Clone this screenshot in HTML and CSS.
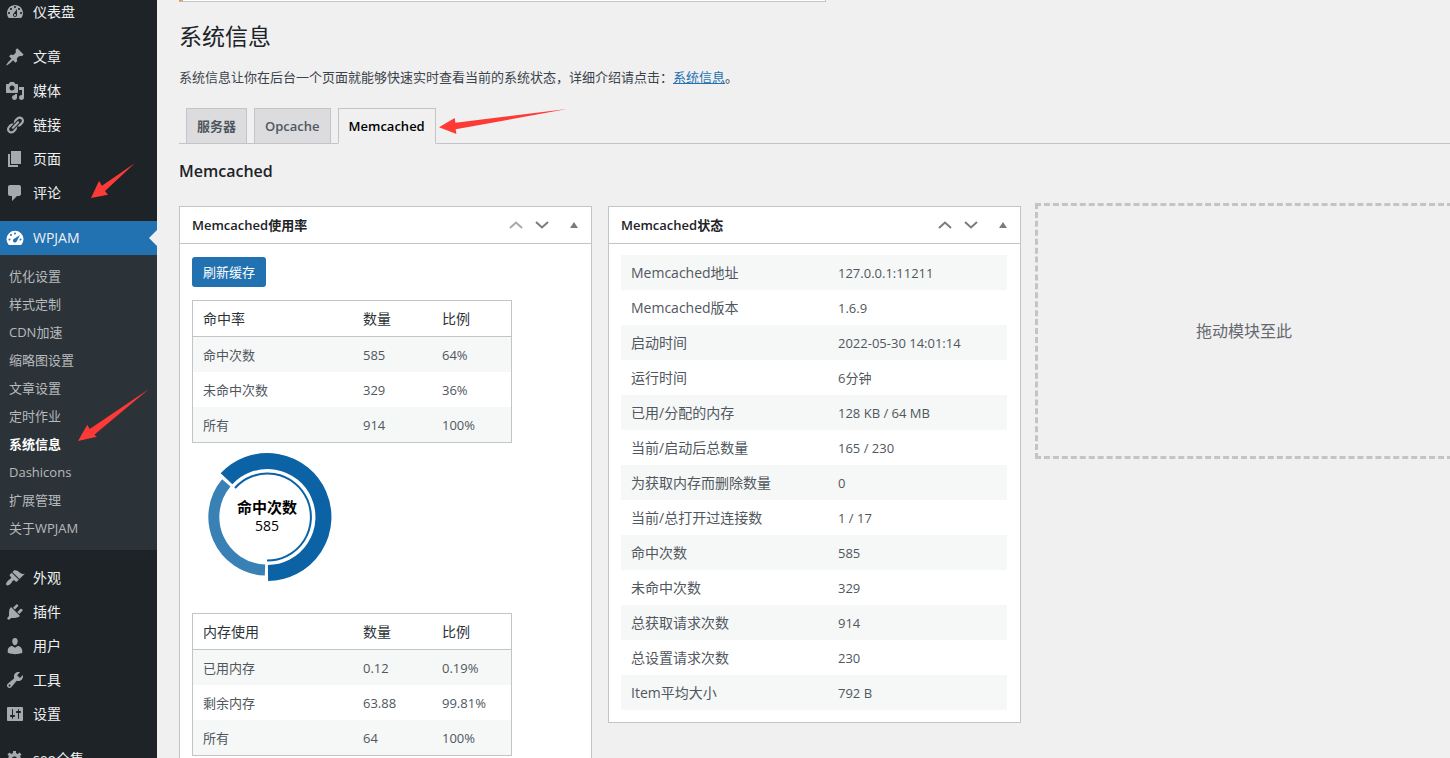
FILE: index.html
```html
<!doctype html>
<html lang="zh-CN">
 <head>
  <meta charset="UTF-8">
  <meta name="viewport" content="width=device-width, initial-scale=1">
  <title>系统信息</title>
  <link rel="stylesheet" href="styles.css">
 </head>
 <body>

	<div id="wrap">

		<!-- 左侧菜单 -->
		<nav id="menu">
			<ul class="menu-list">
				<li><a href="#"><svg viewBox="0 0 20 20"><path d="M3.76 16h12.48c1.1-1.37 1.76-3.11 1.76-5 0-4.42-3.58-8-8-8s-8 3.58-8 8c0 1.89.66 3.63 1.76 5zM10 4c.55 0 1 .45 1 1s-.45 1-1 1-1-.45-1-1 .45-1 1-1zM6 6c.55 0 1 .45 1 1s-.45 1-1 1-1-.45-1-1 .45-1 1-1zm8 0c.55 0 1 .45 1 1s-.45 1-1 1-1-.45-1-1 .45-1 1-1zm-5.37 5.55L12 7v6c0 1.1-.9 2-2 2s-2-.9-2-2c0-.57.24-1.08.63-1.45zM4 10c.55 0 1 .45 1 1s-.45 1-1 1-1-.45-1-1 .45-1 1-1zm12 0c.55 0 1 .45 1 1s-.45 1-1 1-1-.45-1-1 .45-1 1-1zm-5 3c0-.55-.45-1-1-1s-1 .45-1 1 .45 1 1 1 1-.45 1-1z"/></svg>仪表盘</a></li>
				<li class="group"><a href="#"><svg viewBox="0 0 20 20"><path d="M10.44 3.02l1.82-1.82 6.36 6.35-1.83 1.82c-1.05-.68-2.48-.57-3.41.36l-.75.75c-.92.93-1.04 2.35-.35 3.41l-1.83 1.82-2.41-2.41-2.8 2.79c-.42.42-3.38 2.71-3.8 2.29s1.86-3.39 2.28-3.81l2.79-2.79L4.1 9.36l1.83-1.82c1.05.69 2.48.57 3.4-.36l.75-.75c.93-.92 1.05-2.35.36-3.41z"/></svg>文章</a></li>
				<li><a href="#"><svg viewBox="0 0 20 20"><path d="M13 11V4c0-.55-.45-1-1-1h-1.67L9 1H5L3.67 3H2c-.55 0-1 .45-1 1v7c0 .55.45 1 1 1h10c.55 0 1-.45 1-1zM7 4.5c1.38 0 2.5 1.12 2.5 2.5S8.38 9.5 7 9.5 4.5 8.38 4.5 7 5.62 4.5 7 4.5zM14 6h5v10.5c0 1.38-1.12 2.5-2.5 2.5S14 17.88 14 16.5s1.12-2.5 2.5-2.5c.17 0 .34.02.5.05V9h-3V6zm-4 8.05V13h2v3.5c0 1.38-1.12 2.5-2.5 2.5S7 17.88 7 16.5 8.12 14 9.5 14c.17 0 .34.02.5.05z"/></svg>媒体</a></li>
				<li><a href="#"><svg viewBox="0 0 20 20"><path d="M17.74 2.76c1.68 1.69 1.68 4.41 0 6.1l-1.53 1.52c-1.12 1.12-2.7 1.47-4.14 1.09l2.62-2.61.76-.77.76-.76c.84-.84.84-2.2 0-3.04-.84-.85-2.2-.85-3.04 0l-.77.76-3.38 3.38c-.37-1.44-.02-3.02 1.1-4.14l1.52-1.53c1.69-1.68 4.42-1.68 6.1 0zM8.59 13.43l5.34-5.34c.42-.42.42-1.1 0-1.52-.44-.43-1.13-.39-1.53 0l-5.33 5.34c-.42.42-.42 1.1 0 1.52.44.43 1.13.39 1.52 0zm-.76 2.29l4.14-4.15c.38 1.44.03 3.02-1.09 4.14l-1.52 1.53c-1.69 1.68-4.41 1.68-6.1 0-1.68-1.68-1.68-4.42 0-6.1l1.53-1.52c1.12-1.12 2.7-1.47 4.14-1.1l-4.14 4.15c-.85.84-.85 2.2 0 3.05.84.84 2.2.84 3.04 0z"/></svg>链接</a></li>
				<li><a href="#"><svg viewBox="0 0 20 20"><path d="M6 15V2h10v13H6zm-1 1h8v2H3V5h2v11z"/></svg>页面</a></li>
				<li class="marked"><a href="#"><svg viewBox="0 0 20 20"><path d="M5 2h9c1.1 0 2 .9 2 2v7c0 1.1-.9 2-2 2h-2l-5 5v-5H5c-1.1 0-2-.9-2-2V4c0-1.1.9-2 2-2z"/></svg>评论</a>
					<svg class="mark mark-comment" viewBox="0 0 45 36"><path d="M0 36L8 19l3 4.700L44 1 14 29l3 3.700z"/></svg>
				</li>
				<li class="group current">
					<a href="#"><svg viewBox="0 0 20 20"><path d="M3.760 17h12.480A8.500 8.500 0 1 0 3.760 17zM10 4.500a1 1 0 1 1 0 2 1 1 0 0 1 0-2zM6 6a1 1 0 1 1 0 2 1 1 0 0 1 0-2zM4.500 10.500a1 1 0 1 1 0 2 1 1 0 0 1 0-2zm11 0a1 1 0 1 1 0 2 1 1 0 0 1 0-2zM15 7l-3.200 6.300a2 2 0 1 1-2.600-2.600z"/></svg>WPJAM</a>
				</li>
			</ul>
			<ul class="submenu">
				<li><a href="#">优化设置</a></li>
				<li><a href="#">样式定制</a></li>
				<li><a href="#">CDN加速</a></li>
				<li><a href="#">缩略图设置</a></li>
				<li><a href="#">文章设置</a></li>
				<li><a href="#">定时作业</a></li>
				<li class="marked"><a href="#" class="active">系统信息</a>
					<svg class="mark mark-system" viewBox="0 0 71 52"><path d="M0 52l9.300-16.300 2.400 4.300L71 0 16.300 45.700l2.400 2z"/></svg>
				</li>
				<li><a href="#">Dashicons</a></li>
				<li><a href="#">扩展管理</a></li>
				<li><a href="#">关于WPJAM</a></li>
			</ul>
			<ul class="menu-list">
				<li class="group"><a href="#"><svg viewBox="0 0 20 20"><path d="M14.480 11.060L7.410 3.990l1.500-1.500c.5-.56 2.300-.47 3.510.32 1.210.8 1.430 1.280 2.910 2.100 1.180.64 2.450 1.260 4.450.85zm-.71.71L6.700 4.700 4.930 6.470c-.39.39-.39 1.020 0 1.410l1.060 1.060c.39.39.39 1.030 0 1.420-.6.6-1.430 1.110-2.210 1.690-.35.26-.7.53-1.010.84C1.430 14.230.4 16.080 1.400 17.070c.99 1 2.840-.03 4.180-1.360.31-.31.58-.66.85-1.020.57-.78 1.080-1.610 1.690-2.210.39-.39 1.020-.39 1.410 0l1.060 1.060c.39.39 1.020.39 1.410 0z"/></svg>外观</a></li>
				<li><a href="#"><svg viewBox="0 0 20 20"><path d="M13.110 4.360L9.870 7.600 8 5.730l3.240-3.240c.35-.34 1.050-.2 1.560.32.52.51.66 1.210.31 1.550zm-8 1.770l.91-1.120 9.010 9.010-1.190.84c-.71.71-2.630 1.160-3.820 1.160H6.140L4.900 17.260c-.59.59-1.540.59-2.120 0-.59-.58-.59-1.530 0-2.120l1.240-1.240v-3.880c0-1.130.4-3.190 1.090-3.890zm7.260 3.970l3.240-3.240c.34-.35 1.040-.21 1.550.31.52.51.66 1.210.31 1.550l-3.240 3.250z"/></svg>插件</a></li>
				<li><a href="#"><svg viewBox="0 0 20 20"><path d="M10 9.250c-2.270 0-2.730-3.440-2.730-3.440C7 4.020 7.820 2 9.970 2c2.160 0 2.980 2.020 2.710 3.810 0 0-.41 3.440-2.680 3.440zm0 2.570L12.720 10c2.390 0 4.520 2.330 4.520 4.530v2.490s-3.650 1.130-7.240 1.130c-3.650 0-7.240-1.130-7.240-1.130v-2.490c0-2.250 1.940-4.480 4.470-4.480z"/></svg>用户</a></li>
				<li><a href="#"><svg viewBox="0 0 20 20"><path d="M16.680 9.770c-1.340 1.340-3.300 1.670-4.950.99l-5.410 6.520c-.99.99-2.590.99-3.580 0s-.99-2.590 0-3.570l6.520-5.420c-.68-1.650-.35-3.610.99-4.950 1.280-1.280 3.120-1.620 4.720-1.060l-2.890 2.890 2.820 2.820 2.860-2.870c.53 1.580.18 3.390-1.080 4.650zM3.810 16.210c.4.39 1.040.39 1.430 0 .4-.4.4-1.040 0-1.430-.39-.4-1.030-.4-1.430 0-.39.39-.39 1.030 0 1.430z"/></svg>工具</a></li>
				<li><a href="#"><svg viewBox="0 0 20 20"><path d="M18 16V4c0-.55-.45-1-1-1H3c-.55 0-1 .45-1 1v12c0 .55.45 1 1 1h14c.55 0 1-.45 1-1zM8 11h1c.55 0 1 .45 1 1s-.45 1-1 1H8v1.500c0 .28-.22.5-.5.5s-.5-.22-.5-.5V13H6c-.55 0-1-.45-1-1s.45-1 1-1h1V5.500c0-.28.22-.5.5-.5s.5.22.5.5V11zm5-2h-1c-.55 0-1-.45-1-1s.45-1 1-1h1V5.500c0-.28.22-.5.5-.5s.5.22.5.5V7h1c.55 0 1 .45 1 1s-.45 1-1 1h-1v5.500c0 .28-.22.5-.5.5s-.5-.22-.5-.5V9z"/></svg>设置</a></li>
				<li class="group"><a href="#"><svg viewBox="0 0 20 20"><path d="M18 12h-2.180c-.17.7-.44 1.350-.81 1.930l1.540 1.540-2.100 2.100-1.540-1.540c-.58.36-1.230.63-1.910.79V19H8v-2.180c-.68-.16-1.330-.43-1.910-.79l-1.540 1.540-2.120-2.120 1.540-1.540c-.36-.58-.63-1.230-.79-1.910H1V9.030h2.170c.16-.7.44-1.350.8-1.940L2.430 5.550l2.100-2.100 1.540 1.540c.58-.37 1.240-.64 1.930-.81V2h3v2.180c.68.16 1.330.43 1.910.79l1.540-1.540 2.120 2.120-1.540 1.540c.36.59.64 1.240.8 1.940H18V12zm-8.500 1.500c1.660 0 3-1.340 3-3s-1.340-3-3-3-3 1.340-3 3 1.340 3 3 3z"/></svg>seo全集</a></li>
			</ul>
		</nav>

		<!-- 内容区 -->
		<main id="content">
			<div class="notice"></div>

			<h1>系统信息</h1>
			<p class="summary">系统信息让你在后台一个页面就能够快速实时查看当前的系统状态，详细介绍请点击：<a href="#">系统信息</a>。</p>

			<div class="tabs">
				<a href="#">服务器</a>
				<a href="#">Opcache</a>
				<a href="#" class="active">Memcached</a>
				<svg class="mark mark-tab" viewBox="0 0 129 25"><path d="M0 18.300L15.700 9l.7 4.700L128 0 16.700 20.300l.7 4.700z"/></svg>
			</div>

			<h2>Memcached</h2>

			<div class="columns">

				<!-- 使用率 -->
				<section class="pnl">
					<header>
						<h3>Memcached使用率</h3>
						<button type="button" class="order off" aria-label="上移"><svg viewBox="0 0 14 8"><path d="M1 7l6-5.500L13 7"/></svg></button>
						<button type="button" class="order" aria-label="下移"><svg viewBox="0 0 14 8"><path d="M1 1l6 5.500L13 1"/></svg></button>
						<button type="button" class="toggle" aria-label="切换"><svg viewBox="0 0 8 6"><path d="M4 0l4 6H0z"/></svg></button>
					</header>
					<div class="inside">
						<button type="button" class="refresh">刷新缓存</button>

						<table class="usage">
							<thead>
								<tr><th>命中率</th><th>数量</th><th>比例</th></tr>
							</thead>
							<tbody>
								<tr><td>命中次数</td><td>585</td><td>64%</td></tr>
								<tr><td>未命中次数</td><td>329</td><td>36%</td></tr>
								<tr><td>所有</td><td>914</td><td>100%</td></tr>
							</tbody>
						</table>

						<svg class="donut" viewBox="0 1 150 148">
							<path class="hit" d="M76 131A56 56 0 1 0 34.500 36.800"/>
							<path class="ring" d="M75 118.500A43.500 43.500 0 1 0 43 46"/>
							<path class="miss" d="M34.300 40.900A53 53 0 0 0 73 128"/>
							<text class="name" x="75" y="71">命中次数</text>
							<text class="value" x="75" y="89">585</text>
						</svg>

						<table class="usage">
							<thead>
								<tr><th>内存使用</th><th>数量</th><th>比例</th></tr>
							</thead>
							<tbody>
								<tr><td>已用内存</td><td>0.12</td><td>0.19%</td></tr>
								<tr><td>剩余内存</td><td>63.88</td><td>99.81%</td></tr>
								<tr><td>所有</td><td>64</td><td>100%</td></tr>
							</tbody>
						</table>
					</div>
				</section>

				<!-- 状态 -->
				<section class="pnl">
					<header>
						<h3>Memcached状态</h3>
						<button type="button" class="order" aria-label="上移"><svg viewBox="0 0 14 8"><path d="M1 7l6-5.500L13 7"/></svg></button>
						<button type="button" class="order" aria-label="下移"><svg viewBox="0 0 14 8"><path d="M1 1l6 5.500L13 1"/></svg></button>
						<button type="button" class="toggle" aria-label="切换"><svg viewBox="0 0 8 6"><path d="M4 0l4 6H0z"/></svg></button>
					</header>
					<div class="inside">
						<table class="status">
							<tbody>
								<tr><th>Memcached地址</th><td>127.0.0.1:11211</td></tr>
								<tr><th>Memcached版本</th><td>1.6.9</td></tr>
								<tr><th>启动时间</th><td>2022-05-30 14:01:14</td></tr>
								<tr><th>运行时间</th><td>6分钟</td></tr>
								<tr><th>已用/分配的内存</th><td>128 KB / 64 MB</td></tr>
								<tr><th>当前/启动后总数量</th><td>165 / 230</td></tr>
								<tr><th>为获取内存而删除数量</th><td>0</td></tr>
								<tr><th>当前/总打开过连接数</th><td>1 / 17</td></tr>
								<tr><th>命中次数</th><td>585</td></tr>
								<tr><th>未命中次数</th><td>329</td></tr>
								<tr><th>总获取请求次数</th><td>914</td></tr>
								<tr><th>总设置请求次数</th><td>230</td></tr>
								<tr><th>Item平均大小</th><td>792 B</td></tr>
							</tbody>
						</table>
					</div>
				</section>

				<!-- 空白区域 -->
				<div class="empty">拖动模块至此</div>

			</div>
		</main>

	</div>

 </body>
</html>
```
FILE: styles.css
```css
* {
	box-sizing:border-box;
}

body {
	margin:0;
	background:#f0f0f1;
	color:#3c434a;
	font-family:"Open Sans", "Noto Sans CJK SC", sans-serif;
	font-size:13px;
	line-height:20px;
}

ul {
	margin:0;
	padding:0;
	list-style:none;
}

#wrap {
	display:flex;
	height:100vh;
	overflow:hidden;
}

/* 左侧菜单 */
#menu {
	flex:none;
	width:157px;
	margin-top:-5px;
	background:#1d2327;
}

#menu a {
	color:#f0f0f1;
	text-decoration:none;
}

.menu-list a {
	display:flex;
	align-items:center;
	gap:8px;
	height:34px;
	padding-left:5px;
	font-size:14px;
}

.menu-list a svg {
	width:20px;
	height:20px;
	fill:#a7aaad;
}

.menu-list .group {
	margin-top:11px;
}

.current {
	position:relative;
	background:#2271b1;
}

.menu-list .current svg {
	fill:#fff;
}

.current::after {
	content:"";
	position:absolute;
	right:0;
	top:9px;
	border:8px solid transparent;
	border-left-width:0;
	border-right-color:#f0f0f1;
}

.submenu {
	padding:7px 0 8px;
	background:#2c3338;
}

.submenu a {
	display:block;
	padding-left:9px;
	line-height:28px;
}

#menu .submenu a {
	color:#b7babd;
}

#menu .submenu a.active {
	color:#fff;
	font-weight:700;
}

/* 红色箭头 */
.marked {
	position:relative;
}

.mark {
	position:absolute;
	fill:#fe3a37;
}

.mark-comment {
	left:91px;
	top:-14px;
	width:45px;
	height:36px;
}

.mark-system {
	left:78px;
	top:-41px;
	width:71px;
	height:52px;
}

.mark-tab {
	left:260px;
	top:1px;
	width:129px;
	height:25px;
}

/* 内容区 */
#content {
	flex:1;
	min-width:0;
	padding-left:22px;
}

.notice {
	max-width:647px;
	height:2px;
	background:#fff;
	border:1px solid #c3c4c7;
	border-top:0;
	border-left:4px solid #dba656;
}

h1 {
	margin:19px 0 0;
	color:#1d2327;
	font-size:23px;
	font-weight:400;
	line-height:30px;
}

.summary {
	margin:16px 0 21px;
}

.summary a {
	color:#2271b1;
}

.tabs {
	position:relative;
	display:flex;
	gap:7px;
	padding-left:7px;
	border-bottom:1px solid #c3c4c7;
}

.tabs a {
	margin-bottom:-1px;
	padding:5px 10px;
	border:1px solid #c3c4c7;
	background:#dcdcde;
	color:#50575e;
	font-size:13px;
	font-weight:600;
	line-height:24px;
	text-decoration:none;
}

.tabs .active {
	border-bottom-color:#f0f0f1;
	background:#f0f0f1;
	color:#000;
}

h2 {
	margin:15px 0 23px;
	color:#1d2327;
	font-size:16px;
	font-weight:600;
	line-height:24px;
}

.columns {
	display:grid;
	grid-template-columns:repeat(3, 1fr);
	gap:16px;
	align-items:start;
}

/* 面板 */
.pnl {
	border:1px solid #c3c4c7;
	background:#fff;
}

.pnl header {
	display:flex;
	align-items:center;
	height:37px;
	padding:0 12px;
	border-bottom:1px solid #c3c4c7;
}

.pnl h3 {
	flex:1;
	margin:0;
	color:#1d2327;
	font-size:13px;
	font-weight:600;
}

.pnl header button {
	display:flex;
	justify-content:center;
	width:26px;
	padding:0;
	border:0;
	background:none;
}

.pnl header .toggle {
	width:10px;
	margin-left:14px;
}

.order svg {
	width:14px;
	height:8px;
	fill:none;
	stroke:#787c82;
	stroke-width:2;
}

.off svg {
	stroke:#a7aaad;
}

.toggle svg {
	width:8px;
	height:6px;
	fill:#787c82;
}

.inside {
	padding:11px 13px 12px 12px;
}

.refresh {
	display:block;
	height:30px;
	margin:2px 0 13px;
	padding:0 11px;
	border:0;
	border-radius:3px;
	background:#2271b1;
	color:#fff;
	font:inherit;
}

table {
	border-collapse:separate;
	border-spacing:0;
	table-layout:fixed;
}

th, td {
	height:35px;
	padding:0 10px;
	text-align:left;
	font-weight:400;
}

td {
	color:#50575e;
}

tbody tr:nth-child(odd) {
	background:#f6f7f7;
}

.usage {
	width:320px;
	border:1px solid #c3c4c7;
}

.usage th {
	height:36px;
	border-bottom:1px solid #c3c4c7;
	color:#2c3338;
	font-size:14px;
}

.usage th:first-child {
	width:160px;
}

.status {
	width:100%;
}

.status th {
	width:207px;
	color:#50575e;
	font-size:14px;
}

/* 环形图 */
.donut {
	display:block;
	width:150px;
	height:148px;
	margin-bottom:22px;
}

.donut path {
	fill:none;
}

.donut .hit {
	stroke:#0b62a4;
	stroke-width:16;
}

.donut .ring {
	stroke:#0b62a4;
	stroke-width:2;
}

.donut .miss {
	stroke:#3980b5;
	stroke-width:11;
}

.donut text {
	text-anchor:middle;
	fill:#000;
}

.donut .name {
	font-size:15px;
	font-weight:700;
}

.donut .value {
	font-size:14px;
}

/* 虚线框延伸到窗口右侧之外 */
.empty {
	display:flex;
	align-items:center;
	justify-content:center;
	height:250px;
	margin-left:1px;
	outline:3px dashed #c3c4c7;
	color:#646970;
	font-size:16px;
}
```
